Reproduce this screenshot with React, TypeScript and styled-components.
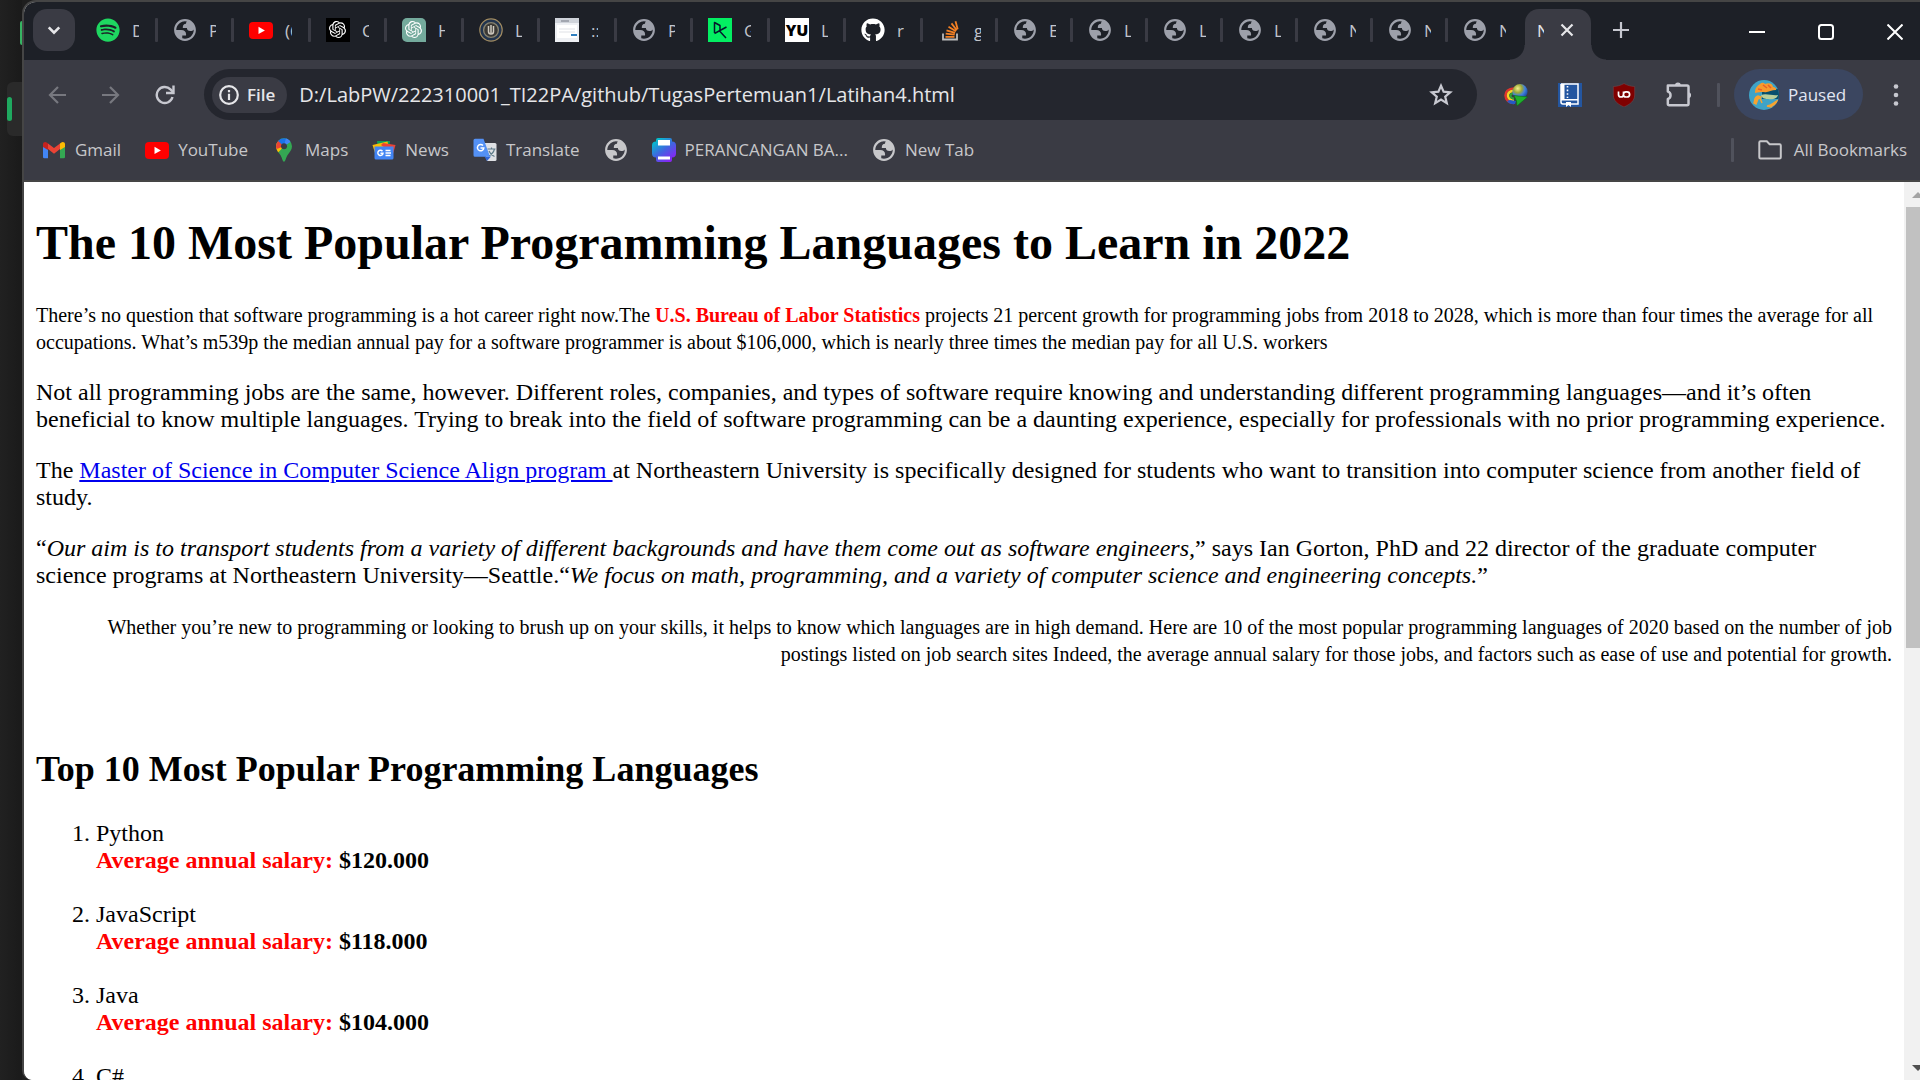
import React from "react";
import styled, { createGlobalStyle } from "styled-components";
import { FaSpotify, FaGithub } from "react-icons/fa";
import { SiOpenai } from "react-icons/si";

const ui = '"Segoe UI", "Open Sans", "Noto Sans", sans-serif';
const serif = '"Times New Roman", "Liberation Serif", serif';

const GlobalStyle = createGlobalStyle`
  * { box-sizing: border-box; }
  body { margin: 0; background: #1e1e1e; }
  button { font: inherit; color: inherit; background: none; border: 0; padding: 0; }
`;

/* ---------- frame ---------- */

const Desktop = styled.div`
  display: grid;
  grid-template-columns: 22px minmax(0, 1fr);
  height: 100vh;
  overflow: hidden;
  background: #1e1e1e;
`;

const Behind = styled.aside`
  display: flex;
  flex-direction: column;
  align-items: flex-end;
  background: linear-gradient(90deg, #212121, #1a1a1a);
`;

const ChatLogo = styled.span`
  width: 2px;
  height: 24px;
  margin-top: 21px;
  border-radius: 2px 0 0 2px;
  background: #36b463;
`;

const SelectedChat = styled.div`
  display: flex;
  align-items: center;
  width: 15px;
  height: 54px;
  margin-top: 37px;
  border-radius: 6px 0 0 6px;
  background: #2a2a2a;

  &::before {
    content: "";
    width: 5px;
    height: 24px;
    border-radius: 3px;
    background: #1fa95f;
  }
`;

const Window = styled.div`
  display: flex;
  flex-direction: column;
  min-height: 0;
  margin-right: -9px;
  overflow: hidden;
  border: solid #454545;
  border-width: 2px 0 0 2px;
  border-radius: 14px 0 0 10px;
  background: #fff;
`;

/* ---------- tab strip ---------- */

const TabStrip = styled.div`
  display: flex;
  flex: none;
  align-items: flex-end;
  height: 58px;
  padding-left: 9px;
  background: #1d2027;
  font: 17px/24px ${ui};
  color: #c3c5cc;
`;

const TabSearch = styled.button`
  display: grid;
  place-items: center;
  width: 42px;
  height: 42px;
  margin: 0 6px 9px 0;
  border-radius: 14px;
  background: #3a3b44;
  color: #e6e6e9;
`;

const Tabs = styled.div`
  display: flex;
`;

const Tab = styled.button<{ $width: number; $last?: boolean }>`
  display: flex;
  align-items: center;
  width: ${(p) => p.$width}px;
  height: 51px;
  padding: 0 0 9px 15px;

  &::after {
    content: "";
    width: 3px;
    height: 24px;
    margin-left: auto;
    border-radius: 1px;
    background: ${(p) => (p.$last ? "transparent" : "#3a3b44")};
  }
`;

const TabTitle = styled.span`
  width: 7px;
  margin-left: 12px;
  padding-top: 2px;
  overflow: hidden;
  white-space: nowrap;
  text-align: left;
`;

const ActiveTab = styled.div`
  position: relative;
  display: flex;
  align-items: center;
  width: 66px;
  height: 51px;
  padding: 0 0 9px;
  border-radius: 14px 14px 0 0;
  background: #3a3b44;
  color: #e6e6e9;

  &::before,
  &::after {
    content: "";
    position: absolute;
    bottom: 0;
    width: 15px;
    height: 15px;
  }
  &::before {
    right: 100%;
    background: radial-gradient(circle at 0 0, transparent 14px, #3a3b44 15px);
  }
  &::after {
    left: 100%;
    background: radial-gradient(circle at 100% 0, transparent 14px, #3a3b44 15px);
  }
`;

const ActiveTitle = styled.span`
  width: 7px;
  margin: 0 16px 0 12px;
  padding-top: 2px;
  overflow: hidden;
`;

const StripButton = styled.button`
  display: grid;
  place-items: center;
  width: 42px;
  height: 42px;
  margin: 0 0 9px 9px;
`;

const CloseTab = styled.button`
  display: grid;
  place-items: center;
  width: 14px;
  height: 24px;
`;

const WindowControls = styled.div`
  display: flex;
  margin-left: auto;
  color: #fff;
`;

const ControlButton = styled.button`
  display: grid;
  place-items: center;
  width: 69px;
  height: 56px;
`;

/* ---------- toolbar ---------- */

const Toolbar = styled.div`
  display: flex;
  flex: none;
  align-items: center;
  gap: 12px;
  height: 69px;
  padding: 0 12px;
  background: #3a3b44;
  font: 17px/24px ${ui};
  color: #c7c8d0;
`;

const ToolButton = styled.button<{ $dim?: boolean }>`
  display: grid;
  place-items: center;
  flex: none;
  width: 42px;
  height: 42px;
  color: ${(p) => (p.$dim ? "#77787f" : "#c7c8d0")};
`;

const Omnibox = styled.div`
  display: flex;
  flex: 1;
  align-items: center;
  height: 51px;
  margin: 0 6px;
  padding: 0 15px 0 8px;
  border-radius: 26px;
  background: #24262e;
`;

const SchemeChip = styled.button`
  display: flex;
  align-items: center;
  gap: 8px;
  height: 36px;
  padding: 0 12px 0 7px;
  border-radius: 18px;
  background: #3a3b44;
  color: #e6e6e9;
  font-weight: 600;
`;

const Address = styled.input`
  flex: 1;
  min-width: 0;
  height: 42px;
  margin-left: 12px;
  padding: 0;
  border: 0;
  outline: 0;
  background: none;
  color: #e6e6e9;
  font: 20px/30px ${ui};
`;

const ToolDivider = styled.span`
  width: 3px;
  height: 24px;
  margin-left: 6px;
  border-radius: 1px;
  background: #50525c;
`;

const Profile = styled.button`
  display: flex;
  align-items: center;
  gap: 9px;
  width: 129px;
  height: 51px;
  margin-left: 2px;
  padding-left: 15px;
  border-radius: 26px;
  background: #3b4660;
  color: #e2e6f3;
`;

/* ---------- bookmarks ---------- */

const BookmarkBar = styled.nav`
  display: flex;
  flex: none;
  align-items: center;
  gap: 24px;
  height: 53px;
  padding: 0 22px 10px 18px;
  border-bottom: 2px solid #454545;
  background: #3a3b44;
  font: 17px/24px ${ui};
`;

const Bookmark = styled.a`
  display: flex;
  align-items: center;
  gap: 9px;
  color: #c7c7ca;
  text-decoration: none;
  white-space: nowrap;
`;

const AllBookmarks = styled.button`
  display: flex;
  align-items: center;
  gap: 12px;
  margin-left: auto;
  color: #c7c7ca;
  white-space: nowrap;

  &::before {
    content: "";
    width: 3px;
    height: 24px;
    margin-right: 12px;
    border-radius: 1px;
    background: #50525c;
  }
`;

/* ---------- document ---------- */

const Viewport = styled.div`
  display: flex;
  flex: 1;
  min-height: 0;
`;

const Article = styled.main`
  flex: 1;
  min-width: 0;
  overflow: hidden;
  padding: 33px 12px 0;
  background: #fff;
  color: #000;
  font: 24px/27px ${serif};
`;

const Title = styled.h1`
  margin: 0 0 31px;
  font-size: 48px;
  line-height: 55px;
`;

const Paragraph = styled.p<{ $right?: boolean }>`
  margin: 0 0 24px;
  text-align: ${(p) => (p.$right ? "right" : "left")};
`;

const Small = styled.span`
  font-size: 20px;
  line-height: 24px;
`;

const Red = styled.b`
  color: #f00;
`;

const DocLink = styled.a`
  color: #00e;
`;

const Subtitle = styled.h2`
  margin: 82px 0 30px;
  font-size: 36px;
  line-height: 41px;
`;

const Ranking = styled.ol`
  margin: 0;
  padding-left: 60px;

  li {
    margin-bottom: 27px;
  }
`;

const Scrollbar = styled.div`
  display: flex;
  flex-direction: column;
  flex: none;
  width: 25px;
  padding-left: 2px;
  background: #f1f1f1;
`;

const ScrollButton = styled.button<{ $dim?: boolean }>`
  display: grid;
  place-items: center;
  height: 25px;
  color: ${(p) => (p.$dim ? "#a3a3a3" : "#505050")};
`;

const ScrollTrack = styled.div`
  display: flex;
  flex: 1;

  &::before {
    content: "";
    width: 100%;
    height: 52%;
    background: #c1c1c1;
  }
`;

/* ---------- icons ---------- */

const Icon = styled.svg`
  display: block;
  flex: none;
`;

const Svg = ({ box = "0 0 24 24", size = 24, children }: { box?: string; size?: number; children: React.ReactNode }) => (
  <Icon width={size} height={size} viewBox={box} fill="none" aria-hidden="true">
    {children}
  </Icon>
);

const Globe = ({ color = "#9da0aa" }: { color?: string }) => (
  <Svg box="1 1 22 22">
    <path
      fill={color}
      fillRule="evenodd"
      d="M12 2c5.52 0 10 4.48 10 10s-4.48 10-10 10S2 17.52 2 12 6.48 2 12 2zM4 12h4.4c3.407.022 4.922 1.73 4.543 5.127H9.488v2.47a8.004 8.004 0 0 0 10.498-8.083C19.327 12.504 18.332 13 17 13c-2.137 0-3.206-.916-3.206-2.75h-3.748c-.274-2.728.683-4.092 2.87-4.092 0-.975.327-1.597.811-1.97A8.004 8.004 0 0 0 4 12z"
    />
  </Svg>
);

const YouTube = () => (
  <Svg>
    <rect y="4" width="24" height="17" rx="4" fill="#f00" />
    <path d="M9.5 8.8v7.2l6.4-3.6z" fill="#fff" />
  </Svg>
);

const OpenAiBlack = () => (
  <Svg>
    <rect width="24" height="24" fill="#000" />
    <SiOpenai x="3" y="3" width="18" height="18" color="#fff" />
  </Svg>
);

const OpenAiTeal = () => (
  <Svg>
    <path d="M5 0h14a5 5 0 0 1 5 5v19H5a5 5 0 0 1-5-5V5a5 5 0 0 1 5-5z" fill="#74aa9c" />
    <SiOpenai x="3" y="3" width="18" height="18" color="#fff" />
  </Svg>
);

const Crest = () => (
  <Svg>
    <circle cx="12" cy="12" r="11.2" fill="#22344e" stroke="#a08a60" strokeWidth="1.2" />
    <circle cx="12" cy="12" r="7.4" fill="#3a3835" stroke="#85816f" strokeWidth="1.4" />
    <path d="M9.500 8v5.500c0 1.600 1 2.500 2.500 2.500s2.500-.9 2.500-2.500V8M12 7v8" stroke="#cfcac0" strokeWidth="1.500" />
  </Svg>
);

const FormPage = () => (
  <Svg>
    <rect width="24" height="24" fill="#eef0f4" />
    <rect width="24" height="5" fill="#cfd3da" />
    <path d="M6 3h8" stroke="#777b85" strokeWidth="1.2" />
    <rect x="2" y="7" width="20" height="13" fill="#fff" />
    <path d="M4 11h16M4 14h16" stroke="#dfe1e6" />
    <rect x="16" y="16" width="6" height="2" fill="#2f7fc0" />
  </Svg>
);

const DataCamp = () => (
  <Svg>
    <rect width="24" height="24" fill="#03ef62" />
    <path d="M6.500 15V4.500l5.500 3v5l-5.500 3M18.500 9l-6.500 3.500M12 12.500v1l6 6.500" stroke="#05192d" strokeWidth="1.500" strokeLinejoin="round" />
  </Svg>
);

const Yu = () => (
  <Svg>
    <rect width="24" height="24" fill="#fff" />
    <text x="12" y="18" textAnchor="middle" fontFamily='"Open Sans", sans-serif' fontWeight="800" fontSize="16" fill="#000">
      YU
    </text>
  </Svg>
);

const StackOverflow = () => (
  <Svg>
    <path d="M5 15.500v6h14v-6" stroke="#bcbbbb" strokeWidth="1.800" />
    <path d="M7.500 18.800h9M7.700 15.700l9 1M8.500 12.300l8.600 2.600M10.500 8.700l7.500 4.600M13.500 5.400l5.300 6.800M17.500 3.200l2.200 8" stroke="#f48024" strokeWidth="1.800" />
  </Svg>
);

const Gmail = () => (
  <Svg>
    <path d="M1 6.500V19a1.300 1.300 0 0 0 1.300 1.300H6V11z" fill="#4285f4" />
    <path d="M23 6.500V19a1.300 1.300 0 0 1-1.300 1.300H18V11z" fill="#34a853" />
    <path d="M6 11V5.500l6 4.600 6-4.600V11l-6 4.700z" fill="#ea4335" />
    <path d="M1 9V6.300C1 4.200 3.300 3.400 5 4.700l1 .8V12z" fill="#c5221f" />
    <path d="M23 9V6.300c0-2.100-2.300-2.900-4-1.600l-1 .8V12z" fill="#fbbc04" />
  </Svg>
);

const Maps = () => (
  <Svg>
    <defs>
      <clipPath id="pin">
        <path d="M12 .3a8 8 0 0 1 8 8c0 3.700-2.300 5.700-4.200 8.500C13.900 19.500 13.500 23.700 12 23.700s-1.900-4.200-3.800-6.900C6.300 14 4 12 4 8.300a8 8 0 0 1 8-8z" />
      </clipPath>
    </defs>
    <g clipPath="url(#pin)">
      <rect width="24" height="24" fill="#34a853" />
      <path d="M0 21 12 8.300 4 3H0z" fill="#fbbc04" />
      <path d="M2 12 12 8.300 6 2 2 4z" fill="#ea4335" />
      <path d="M5.500 2.500 12 8.300 19 0H7z" fill="#1a73e8" />
      <path d="m12 8.300 6.500-6L14 0z" fill="#4285f4" />
      <path d="M12 8.300 20 3v-3h-4z" fill="#4285f4" />
      <path d="m2 17 10-8.700L5 13z" fill="#fbbc04" />
    </g>
    <circle cx="12" cy="8.300" r="3" fill="#3a3b44" />
  </Svg>
);

const News = () => (
  <Svg>
    <path d="M5 3h13l-1 8H6z" fill="#0f9d58" />
    <path d="m.5 7 15-3.500 2 9L3 15z" fill="#fbbc04" />
    <path d="m9 7 2-2 12.500 2-2.500 9z" fill="#ea4335" />
    <path d="M2.500 8.500h19V20a1.500 1.500 0 0 1-1.500 1.500H4A1.500 1.500 0 0 1 2.500 20z" fill="#4285f4" />
    <path d="M10.500 13.300a2.600 2.600 0 1 0 .5 2H8.500" stroke="#fff" strokeWidth="1.400" />
    <path d="M13.500 12.500h5M13.500 15h5.500M13.500 17.500h5" stroke="#fff" strokeWidth="1.400" />
  </Svg>
);

const Translate = () => (
  <Svg>
    <path d="M10 5h12a1.500 1.500 0 0 1 1.500 1.500v15A1.500 1.500 0 0 1 22 23h-8z" fill="#dfe1e5" />
    <path d="M14.500 11h8M18.500 9.500V11M21.500 11c-.8 3.200-3 5.500-6 7M16 13c1 2.500 3 4.500 5.500 5.500" stroke="#607d8b" strokeWidth="1.200" />
    <path d="M11.500 18.500 14 23l4-4.500z" fill="#3367d6" />
    <path d="M2 .8h8.500l6.500 18H2A1.500 1.500 0 0 1 .5 17.300v-15A1.500 1.500 0 0 1 2 .8z" fill="#5491f5" />
    <path d="M10 7.500a3.200 3.200 0 1 0 .8 2.500H7.500" stroke="#fff" strokeWidth="1.500" />
  </Svg>
);

const Printer = () => (
  <Svg>
    <defs>
      <linearGradient id="ink" x1="3" y1="2" x2="19" y2="23" gradientUnits="userSpaceOnUse">
        <stop stopColor="#00c4cc" />
        <stop offset=".5" stopColor="#4065e0" />
        <stop offset="1" stopColor="#8b22f5" />
      </linearGradient>
    </defs>
    <path d="M6 0h12a2 2 0 0 1 2 2v1.500a4 4 0 0 1 4 4v8a4 4 0 0 1-4 4V22a2 2 0 0 1-2 2H6a2 2 0 0 1-2-2v-2.500a4 4 0 0 1-4-4v-8a4 4 0 0 1 4-4V2a2 2 0 0 1 2-2z" fill="url(#ink)" />
    <path d="M6 2h12v5.500H6zM6 18.500h12v3H6z" fill="#fff" />
  </Svg>
);

const DownloadManager = () => (
  <Svg>
    <defs>
      <radialGradient id="ball" cx=".35" cy=".3" r=".8">
        <stop stopColor="#f4f08a" />
        <stop offset=".35" stopColor="#9aa83a" />
        <stop offset=".6" stopColor="#3f7fe0" />
        <stop offset="1" stopColor="#123a8c" />
      </radialGradient>
    </defs>
    <path d="M10 5.500c-6 0-8.500 3.500-8.500 7 0 4.500 4 7.500 8.500 7.500" stroke="#e0342c" strokeWidth="2.500" />
    <path d="M10 8c-4.500 0-6 2-6 4.500 0 3 3 5.200 6 5.200" stroke="#f5d327" strokeWidth="2.500" />
    <path d="M10 10.500c-2.500 0-3.600 1-3.600 2.200 0 1.500 1.600 2.800 3.600 2.800" stroke="#31a136" strokeWidth="2.200" />
    <path d="M3 18c2 3 5.500 3.500 8 3l1-3-6-1z" fill="#2458c5" />
    <circle cx="16" cy="8.500" r="7.600" fill="url(#ball)" />
    <path d="m10 12.500 13.500 1.500L13 23l-.5-5z" fill="#1fb02d" stroke="#0b6914" strokeWidth=".6" />
  </Svg>
);

const Notebook = () => (
  <Svg>
    <rect width="24" height="24" fill="#2456a0" />
    <path d="M3 1h17v20h-7M8 21H5a2 2 0 0 1-2-2V1" stroke="#fff" strokeWidth="1.500" />
    <path d="M3 1h3.500v15H3zM3 16h17v1.600H3z" fill="#fff" />
    <path d="M8 19h5v5l-2.500-2L8 24z" fill="#fff" />
    <path d="M9.500 3v12" stroke="#fff" strokeWidth="1.600" strokeDasharray="1.600 2" />
  </Svg>
);

const Shield = () => (
  <Svg>
    <path d="M12 .5c3.500 2 7 2.800 10.700 3V12c0 6-5 9.500-10.700 12C6.300 21.500 1.300 18 1.300 12V3.500C5 3.300 8.500 2.500 12 .5z" fill="#800000" stroke="#6a4a50" strokeWidth=".6" />
    <path d="M6.500 8.500v3a2.500 2.500 0 0 0 5 0v-3M14 8.800h1a2.600 2.600 0 0 1 0 5.200h-1a2.600 2.600 0 0 1 0-5.200z" stroke="#fff" strokeWidth="1.700" />
  </Svg>
);

const Puzzle = () => (
  <Svg size={26} box="-1 2 23 23">
    <path
      d="M2 4.500h17a1.300 1.300 0 0 1 1.300 1.300v14.900a1.300 1.300 0 0 1-1.300 1.300H3.300A1.300 1.300 0 0 1 2 20.700v-4.200c3.200-.7 3.200-5.800 0-6.500z"
      transform="translate(-.5 .5)"
      stroke="currentColor"
      strokeWidth="2.200"
      strokeLinejoin="round"
    />
    <path d="M7.800 5a2.600 2.600 0 0 1 5.200 0zM19.500 11a2.600 2.600 0 0 1 0 5.200z" fill="currentColor" />
  </Svg>
);

const Avatar = () => (
  <Svg size={30} box="0 0 30 30">
    <defs>
      <clipPath id="face">
        <circle cx="15" cy="15" r="15" />
      </clipPath>
    </defs>
    <g clipPath="url(#face)">
      <rect width="30" height="30" fill="#3ea3c7" />
      <path d="M13 9h17v10H13z" fill="#07506e" />
      <path d="M6 12c0-4 2-6 5-8 2-2 4-1 5 0 4-2 8 0 8 3 2 0 4 2 3 3-5 0-8 3-12 2-3 0-6 0-9 1z" fill="#f79a2e" />
      <path d="m14 5 4 3M9 9l4 1M19 5l3 3" stroke="#e7602a" strokeWidth="1.500" />
      <path d="M12 15c5-2 12 1 17 0-1 4-6 5-10 4-4 0-6-1-7-4z" fill="#b8cf9a" />
      <path d="M5 23c1-2 0-6 4-7l3 1-3 2-2 5zM11 18l2 5M18 26c4 0 5-2 10-5-1 4-5 4-6 6z" stroke="#f7a330" strokeWidth="1.500" fill="#f7a330" />
    </g>
  </Svg>
);

/* ---------- data ---------- */

const tabs: [React.ReactNode, string, number][] = [
  [<FaSpotify size={24} color="#1ed760" />, "D", 77],
  [<Globe />, "P", 76],
  [<YouTube />, "(6", 77],
  [<OpenAiBlack />, "C", 76],
  [<OpenAiTeal />, "H", 77],
  [<Crest />, "L", 76],
  [<FormPage />, "::", 77],
  [<Globe />, "P", 76],
  [<DataCamp />, "G", 77],
  [<Yu />, "L", 76],
  [<FaGithub size={24} color="#fff" />, "ri", 77],
  [<StackOverflow />, "g", 75],
  [<Globe />, "E", 75],
  [<Globe />, "L", 75],
  [<Globe />, "L", 75],
  [<Globe />, "L", 75],
  [<Globe />, "N", 75],
  [<Globe />, "N", 75],
  [<Globe />, "N", 77],
];

const bookmarks: [React.ReactNode, string][] = [
  [<Gmail />, "Gmail"],
  [<YouTube />, "YouTube"],
  [<Maps />, "Maps"],
  [<News />, "News"],
  [<Translate />, "Translate"],
  [<Globe color="#c7c7ca" />, ""],
  [<Printer />, "PERANCANGAN BA..."],
  [<Globe color="#c7c7ca" />, "New Tab"],
];

const languages: [string, string][] = [
  ["Python", "$120.000"],
  ["JavaScript", "$118.000"],
  ["Java", "$104.000"],
  ["C#", ""],
];

export default function App() {
  return (
    <Desktop>
      <GlobalStyle />
      <Behind>
        <ChatLogo />
        <SelectedChat />
      </Behind>
      <Window>
        <TabStrip>
          <TabSearch aria-label="Search tabs">
            <Svg size={18}>
              <path d="m5 8.500 7 7 7-7" stroke="currentColor" strokeWidth="3.600" />
            </Svg>
          </TabSearch>
          <Tabs>
            {tabs.map(([icon, title, width], i) => (
              <Tab key={i} $width={width} $last={i === tabs.length - 1}>
                {icon}
                <TabTitle>{title}</TabTitle>
              </Tab>
            ))}
            <ActiveTab>
              <ActiveTitle>N</ActiveTitle>
              <CloseTab aria-label="Close tab">
                <Svg size={14} box="0 0 14 14">
                  <path d="m1.500 1.500 11 11m0-11-11 11" stroke="currentColor" strokeWidth="2.200" />
                </Svg>
              </CloseTab>
            </ActiveTab>
          </Tabs>
          <StripButton aria-label="New tab">
            <Svg size={16} box="0 0 16 16">
              <path d="M8 0v16M0 8h16" stroke="#c7c8d0" strokeWidth="2.200" />
            </Svg>
          </StripButton>
          <WindowControls>
            <ControlButton aria-label="Minimize">
              <Svg size={16} box="0 0 16 16">
                <path d="M0 8h16" stroke="#fff" strokeWidth="2" />
              </Svg>
            </ControlButton>
            <ControlButton aria-label="Maximize">
              <Svg size={16} box="0 0 16 16">
                <rect x="1" y="1" width="14" height="14" rx="2.500" stroke="#fff" strokeWidth="2" />
              </Svg>
            </ControlButton>
            <ControlButton aria-label="Close">
              <Svg size={16} box="0 0 16 16">
                <path d="m.5.5 15 15m0-15-15 15" stroke="#fff" strokeWidth="2" />
              </Svg>
            </ControlButton>
          </WindowControls>
        </TabStrip>

        <Toolbar>
          <ToolButton $dim aria-label="Back">
            <Svg size={18} box="0 0 18 18">
              <path d="M18 9H2m8-8L2 9l8 8" stroke="currentColor" strokeWidth="2.200" />
            </Svg>
          </ToolButton>
          <ToolButton $dim aria-label="Forward">
            <Svg size={18} box="0 0 18 18">
              <path d="M0 9h16M8 1l8 8-8 8" stroke="currentColor" strokeWidth="2.200" />
            </Svg>
          </ToolButton>
          <ToolButton aria-label="Reload">
            <Svg size={20} box="0 0 20 20">
              <path d="M17.500 12a8 8 0 1 1-2-7.600L18 7" stroke="currentColor" strokeWidth="2.400" />
              <path d="M18.500.5v7.500H11" stroke="currentColor" strokeWidth="2.400" />
            </Svg>
          </ToolButton>
          <Omnibox>
            <SchemeChip>
              <Svg size={20} box="0 0 20 20">
                <circle cx="10" cy="10" r="8.800" stroke="currentColor" strokeWidth="2.200" />
                <path d="M10 8.800V15M10 5v2.200" stroke="currentColor" strokeWidth="2.200" />
              </Svg>
              File
            </SchemeChip>
            <Address aria-label="Address" defaultValue="D:/LabPW/222310001_TI22PA/github/TugasPertemuan1/Latihan4.html" />
            <ToolButton aria-label="Bookmark this page">
              <Svg size={24}>
                <path d="m12 2.700 2.600 6 6.600.6-5 4.300 1.600 6.500-5.800-3.500-5.800 3.500 1.600-6.500-5-4.300 6.600-.6z" stroke="currentColor" strokeWidth="2.200" />
              </Svg>
            </ToolButton>
          </Omnibox>
          <ToolButton aria-label="Download manager"><DownloadManager /></ToolButton>
          <ToolButton aria-label="Notebook"><Notebook /></ToolButton>
          <ToolButton aria-label="Content blocker"><Shield /></ToolButton>
          <ToolButton aria-label="Extensions"><Puzzle /></ToolButton>
          <ToolDivider />
          <Profile>
            <Avatar />
            Paused
          </Profile>
          <ToolButton aria-label="Menu">
            <Svg>
              <g fill="currentColor">
                <circle cx="12" cy="3.500" r="2.300" />
                <circle cx="12" cy="12" r="2.300" />
                <circle cx="12" cy="20.500" r="2.300" />
              </g>
            </Svg>
          </ToolButton>
        </Toolbar>

        <BookmarkBar>
          {bookmarks.map(([icon, label], i) => (
            <Bookmark key={i} href="#" aria-label={label || "Bookmark"}>
              {icon}
              {label}
            </Bookmark>
          ))}
          <AllBookmarks>
            <Svg>
              <path d="M1.300 4.500c0-.7.500-1.200 1.200-1.200h6.300l2.800 2.900h10c.7 0 1.200.5 1.200 1.200v11.900c0 .7-.5 1.200-1.200 1.200H2.500c-.7 0-1.200-.5-1.200-1.200z" stroke="currentColor" strokeWidth="2" />
            </Svg>
            All Bookmarks
          </AllBookmarks>
        </BookmarkBar>

        <Viewport>
          <Article>
            <Title>The 10 Most Popular Programming Languages to Learn in 2022</Title>
            <Paragraph>
              <Small>
                There’s no question that software programming is a hot career right now.The <Red>U.S. Bureau of Labor Statistics</Red>{" "}
                projects 21 percent growth for programming jobs from 2018 to 2028, which is more than four times the average for all
                occupations. What’s m539p the median annual pay for a software programmer is about $106,000, which is nearly three
                times the median pay for all U.S. workers
              </Small>
            </Paragraph>
            <Paragraph>
              Not all programming jobs are the same, however. Different roles, companies, and types of software require knowing and
              understanding different programming languages—and it’s often beneficial to know multiple languages. Trying to break
              into the field of software programming can be a daunting experience, especially for professionals with no prior
              programming experience.
            </Paragraph>
            <Paragraph>
              The <DocLink href="#">Master of Science in Computer Science Align program </DocLink>at Northeastern University is
              specifically designed for students who want to transition into computer science from another field of study.
            </Paragraph>
            <Paragraph>
              “<i>Our aim is to transport students from a variety of different backgrounds and have them come out as software
              engineers,</i>” says Ian Gorton, PhD and 22 director of the graduate computer science programs at Northeastern
              University—Seattle.“<i>We focus on math, programming, and a variety of computer science and engineering concepts.</i>”
            </Paragraph>
            <Paragraph $right>
              <Small>
                Whether you’re new to programming or looking to brush up on your skills, it helps to know which languages are in high
                demand. Here are 10 of the most popular programming languages of 2020 based on the number of job postings listed on
                job search sites Indeed, the average annual salary for those jobs, and factors such as ease of use and potential for
                growth.
              </Small>
            </Paragraph>
            <Subtitle>Top 10 Most Popular Programming Languages</Subtitle>
            <Ranking>
              {languages.map(([name, salary]) => (
                <li key={name}>
                  {name}
                  {salary && (
                    <>
                      <br />
                      <Red>Average annual salary:</Red> <b>{salary}</b>
                    </>
                  )}
                </li>
              ))}
            </Ranking>
          </Article>
          <Scrollbar>
            <ScrollButton $dim aria-label="Scroll up">
              <Svg size={12} box="0 0 12 12">
                <path d="m0 9 6-6 6 6z" fill="currentColor" />
              </Svg>
            </ScrollButton>
            <ScrollTrack />
            <ScrollButton aria-label="Scroll down">
              <Svg size={12} box="0 0 12 12">
                <path d="m0 3 6 6 6-6z" fill="currentColor" />
              </Svg>
            </ScrollButton>
          </Scrollbar>
        </Viewport>
      </Window>
    </Desktop>
  );
}
